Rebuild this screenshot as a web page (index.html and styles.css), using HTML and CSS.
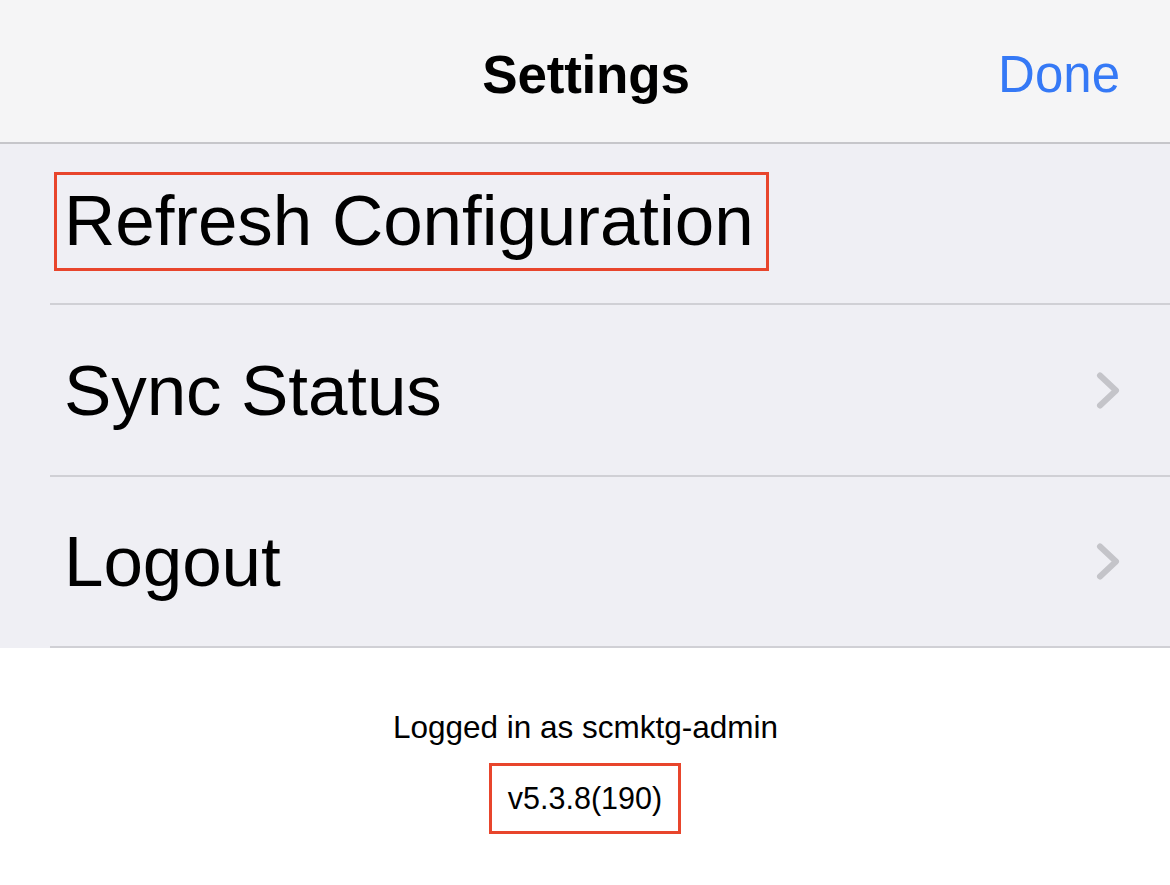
FILE: index.html
```html
<!DOCTYPE html>
<html lang="en">
<head>
<meta charset="utf-8">
<title>Settings</title>
<link rel="stylesheet" href="styles.css">
</head>
<body>
<div class="screen">
  <header class="navbar">
    <div class="nav-side"></div>
    <div class="nav-title">Settings</div>
    <div class="nav-side nav-right"><span class="nav-done">Done</span></div>
  </header>

  <section class="list">
    <div class="row row-first">
      <div class="row-inner">
        <span class="highlight highlight-row">Refresh Configuration</span>
      </div>
    </div>
    <div class="row row-second">
      <div class="row-inner">
        <span class="row-label">Sync Status</span>
        <svg class="chevron" width="26" height="40" viewBox="0 0 26 40" aria-hidden="true">
          <polyline points="4,4.5 20,19.5 4,34.5" fill="none" stroke="#c4c4c9" stroke-width="6" stroke-linecap="round" stroke-linejoin="round"/>
        </svg>
      </div>
    </div>
    <div class="row row-third">
      <div class="row-inner">
        <span class="row-label">Logout</span>
        <svg class="chevron" width="26" height="40" viewBox="0 0 26 40" aria-hidden="true">
          <polyline points="4,4.5 20,19.5 4,34.5" fill="none" stroke="#c4c4c9" stroke-width="6" stroke-linecap="round" stroke-linejoin="round"/>
        </svg>
      </div>
    </div>
  </section>

  <footer class="footer">
    <div class="footer-user">Logged in as scmktg-admin</div>
    <div class="highlight highlight-version">v5.3.8(190)</div>
  </footer>
</div>
</body>
</html>
```

FILE: styles.css
```css
* {
  box-sizing: border-box;
}

html, body {
  margin: 0;
  padding: 0;
  background: #ffffff;
}

body {
  font-family: "Liberation Sans", Arial, Helvetica, sans-serif;
  color: #000000;
}

.screen {
  width: 1170px;
  height: 885px;
  overflow: hidden;
  display: flex;
  flex-direction: column;
}

/* Navigation bar */
.navbar {
  height: 144px;
  flex: 0 0 144px;
  background: #f5f5f6;
  border-bottom: 2px solid #c6c6ca;
  display: grid;
  grid-template-columns: 1fr auto 1fr;
  align-items: center;
  padding: 7px 50px 0 50px;
}

.nav-title {
  font-size: 53px;
  font-weight: bold;
  letter-spacing: -0.2px;
  text-align: center;
  padding-left: 2px;
}

.nav-right {
  display: flex;
  justify-content: flex-end;
}

.nav-done {
  font-size: 51px;
  color: #3579f6;
}

/* List */
.list {
  background: #efeff4;
  display: flex;
  flex-direction: column;
}

.row {
  padding-left: 50px;
}

.row-inner {
  display: flex;
  align-items: center;
  justify-content: space-between;
  padding-left: 14px;
  padding-right: 50px;
  border-bottom: 2px solid #d0d0d5;
}

.row-first .row-inner {
  height: 161px;
  padding-bottom: 4px;
}

.row-second .row-inner {
  height: 172px;
}

.row-third .row-inner {
  height: 171px;
}

.row-label {
  font-size: 71px;
  letter-spacing: -0.1px;
}

.chevron {
  display: block;
  margin-top: 1px;
  margin-right: -2px;
}

/* Red highlight boxes */
.highlight {
  border: 3px solid #e8452c;
}

.highlight-row {
  display: inline-block;
  font-size: 71px;
  letter-spacing: -0.05px;
  margin-left: -10px;
  padding: 5px 12px 7px 7px;
}

/* Footer */
.footer {
  flex: 1;
  background: #ffffff;
  display: flex;
  flex-direction: column;
  align-items: center;
  padding-top: 61px;
}

.footer-user {
  font-size: 31.5px;
  padding-left: 1px;
}

.highlight-version {
  margin-top: 17px;
  font-size: 30.5px;
  padding: 15px 16px 15px 16px;
}
```
